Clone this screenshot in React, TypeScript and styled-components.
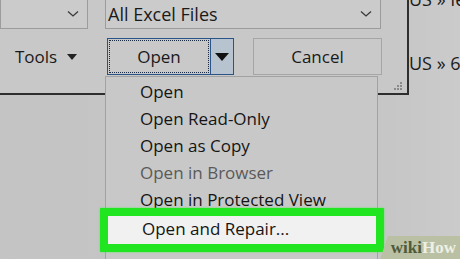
import React from "react";
import styled, { createGlobalStyle } from "styled-components";

const Global = createGlobalStyle`
  html, body { margin: 0; padding: 0; }
  body { width: 460px; height: 259px; overflow: hidden; background: #c5c5c5; }
  * { box-sizing: border-box; }
`;

const Desktop = styled.div`
  position: relative;
  width: 460px;
  height: 259px;
  overflow: hidden;
  background: linear-gradient(90deg, #c4c4c4 0%, #c6c6c6 85%, #cbcbcb 100%);
  font-family: "Open Sans", "Noto Sans", sans-serif;
  color: #1a1a1a;
`;

const PathList = styled.div`
  display: flex;
  flex-direction: column;
  gap: 38px;
  padding: 0 0 0 409px;
  margin-top: -14px;
`;

const PathLine = styled.div`
  font-size: 18px;
  line-height: 26px;
  white-space: nowrap;
  color: #1c1c1c;
`;

const Dialog = styled.div`
  position: absolute;
  left: 0;
  top: 0;
  width: 409px;
  height: 95px;
  background: #c8c8c8;
  border-right: 2px solid #2e2e2e;
  border-bottom: 2px solid #2e2e2e;
  display: flex;
  flex-direction: column;
  gap: 9px;
`;

const Row = styled.div`
  display: flex;
  align-items: center;
  height: 29px;
`;

const Select = styled.div<{ $w: number; $ml: number }>`
  width: ${(p) => p.$w}px;
  margin-left: ${(p) => p.$ml}px;
  height: 30px;
  margin-top: -1px;
  border: 1px solid #9c9c9c;
  background: #cbcbcb;
  display: flex;
  align-items: center;
  justify-content: space-between;
  padding: 0 8px 0 2px;
  font-size: 18px;
  color: #1a1a1a;
`;

const Chevron = () => (
  <svg width="12" height="8" viewBox="0 0 12 8">
    <path d="M1 1.5 L6 6 L11 1.5" fill="none" stroke="#3a3a3a" strokeWidth="1.3" />
  </svg>
);

const ButtonRow = styled.div`
  display: flex;
  align-items: center;
  height: 37px;
`;

const ToolsButton = styled.div`
  width: 107px;
  display: flex;
  align-items: center;
  gap: 10px;
  padding-left: 15px;
  font-size: 17px;
`;

const DownTri = styled.span`
  width: 0;
  height: 0;
  border-left: 5px solid transparent;
  border-right: 5px solid transparent;
  border-top: 6px solid #222;
`;

const Split = styled.div`
  display: flex;
  width: 127px;
  height: 37px;
  border: 1px solid #2a5488;
  background: #c9c9c9;
`;

const SplitMain = styled.div`
  flex: 1;
  display: flex;
  align-items: center;
  justify-content: center;
  font-size: 17px;
  border: 1px dotted #1a2a44;
  margin: 1px;
`;

const SplitArrow = styled.div`
  width: 23px;
  display: flex;
  align-items: center;
  justify-content: center;
  background: #b7c3cf;
  border-left: 1px solid #2a5488;
`;

const BigTri = styled.span`
  width: 0;
  height: 0;
  border-left: 7px solid transparent;
  border-right: 7px solid transparent;
  border-top: 8px solid #111;
`;

const Button = styled.div`
  margin-left: 19px;
  width: 129px;
  height: 37px;
  border: 1px solid #a6a6a6;
  background: #c9c9c9;
  display: flex;
  align-items: center;
  justify-content: center;
  font-size: 17px;
`;

const Grip = styled.div`
  position: absolute;
  right: 5px;
  bottom: 3px;
  display: grid;
  grid-template-columns: repeat(3, 2px);
  grid-template-rows: repeat(3, 2px);
  gap: 1px;
`;

const Dot = styled.span<{ $on: boolean }>`
  background: ${(p) => (p.$on ? "#8a8a8a" : "transparent")};
`;

const Menu = styled.div`
  position: absolute;
  left: 105px;
  top: 76px;
  width: 273px;
  height: 200px;
  background: #c8c8c8;
  border: 1px solid #a2a2a2;
  padding-top: 1px;
  display: flex;
  flex-direction: column;
`;

const Item = styled.div<{ $disabled?: boolean; $active?: boolean }>`
  height: 27px;
  display: flex;
  align-items: center;
  padding-left: 34px;
  font-size: 17px;
  white-space: nowrap;
  color: ${(p) => (p.$disabled ? "#5a5a5a" : "#151515")};
  ${(p) =>
    p.$active &&
    `
    margin: -5px -7px 0 -6px;
    height: 44px;
    padding-left: 34px;
    padding-bottom: 3px;
    background: #f1f1f1;
    border: 8px solid #22e522;
    border-radius: 1px;
    box-shadow: 0 0 2px #4cf04c;
  `}
`;

const Watermark = styled.div`
  position: absolute;
  right: 0;
  bottom: 0;
  width: 80px;
  height: 23px;
  background: #b9c0a4;
  clip-path: polygon(8px 0, 100% 0, 100% 100%, 0 100%);
  display: flex;
  align-items: center;
  justify-content: flex-end;
  padding-right: 4px;
  font-family: "Liberation Serif", "DejaVu Serif", serif;
  font-weight: bold;
  font-size: 17px;
`;

const Wiki = styled.span`
  color: #4f5a3a;
`;
const How = styled.span`
  color: #eef0e6;
`;

const gripDots = [false, false, true, false, true, true, true, true, true];

export default function App() {
  return (
    <>
      <Global />
      <Desktop>
        <PathList>
          <PathLine>US » Ie</PathLine>
          <PathLine>US » 64</PathLine>
        </PathList>
        <Dialog>
          <Row>
            <Select $w={88} $ml={0}>
              <span />
              <Chevron />
            </Select>
            <Select $w={276} $ml={17}>
              <span>All Excel Files</span>
              <Chevron />
            </Select>
          </Row>
          <ButtonRow>
            <ToolsButton>
              Tools <DownTri />
            </ToolsButton>
            <Split>
              <SplitMain>Open</SplitMain>
              <SplitArrow>
                <BigTri />
              </SplitArrow>
            </Split>
            <Button>Cancel</Button>
          </ButtonRow>
          <Grip>
            {gripDots.map((d, i) => (
              <Dot key={i} $on={d} />
            ))}
          </Grip>
        </Dialog>
        <Menu>
          <Item>Open</Item>
          <Item>Open Read-Only</Item>
          <Item>Open as Copy</Item>
          <Item $disabled>Open in Browser</Item>
          <Item>Open in Protected View</Item>
          <Item $active>Open and Repair...</Item>
        </Menu>
        <Watermark>
          <Wiki>wiki</Wiki>
          <How>How</How>
        </Watermark>
      </Desktop>
    </>
  );
}
